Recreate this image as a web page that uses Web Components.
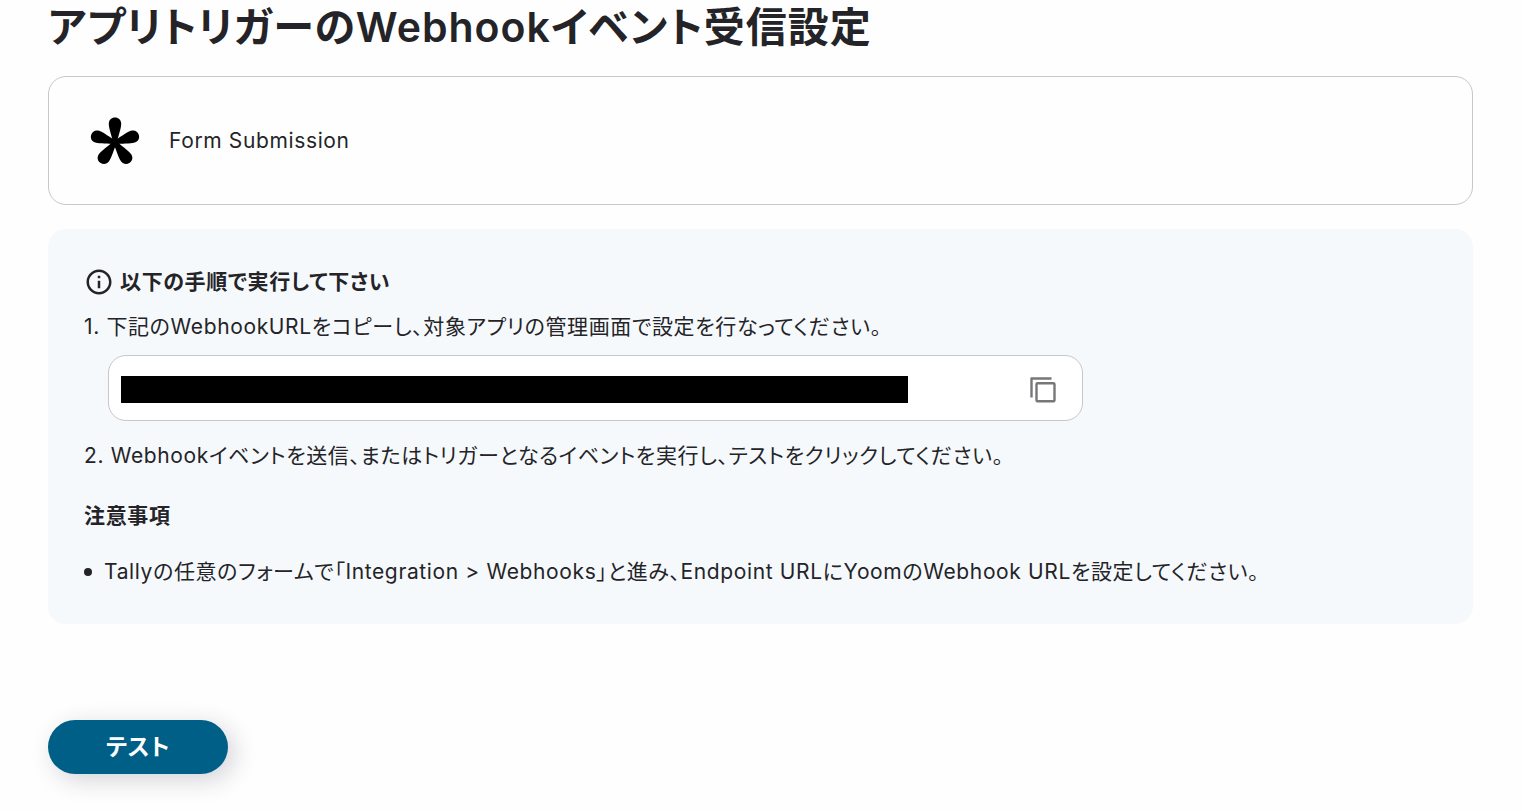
<!DOCTYPE html>
<html lang="ja">
<head>
<meta charset="utf-8">
<meta name="viewport" content="width=device-width, initial-scale=1">
<title>アプリトリガーのWebhookイベント受信設定</title>
<style>
body {
  margin: 0;
  background-color: #fefefe;
  color: #242428;
  font-family: Inter, "Noto Sans CJK JP", sans-serif;
  font-size: 21px;
  line-height: 32px;
  letter-spacing: 0.03em;
  font-feature-settings: "palt";
}
</style>
</head>
<body>
<webhook-page>
  <span slot="title">アプリトリガーのWebhookイベント受信設定</span>
  <trigger-card>Form Submission</trigger-card>
  <guide-panel>
    <span slot="heading">以下の手順で実行して下さい</span>
    <span slot="first">1. 下記のWebhookURLをコピーし、対象アプリの管理画面で設定を行なってください。</span>
    <copy-field slot="field"></copy-field>
    <span slot="second">2. Webhookイベントを送信、またはトリガーとなるイベントを実行し、テストをクリックしてください。</span>
    <span slot="notes">注意事項</span>
    <span slot="note">Tallyの任意のフォームで「Integration &gt; Webhooks」と進み、Endpoint URLにYoomのWebhook URLを設定してください。</span>
  </guide-panel>
  <test-button slot="action">テスト</test-button>
</webhook-page>

<script>
"use strict"

class WebhookPage extends HTMLElement {
  constructor() {
    super();
    const template = document.createElement('template');
    template.innerHTML = `
    <style>
    :host {
      display: block;
      padding: 0 49px 36px 48px;
    }
    h1 {
      margin: 0 0 22px;
      font-size: 41px;
      line-height: 54px;
      font-weight: 600;
      letter-spacing: 1px;
    }
    main {
      display: flex;
      flex-direction: column;
      gap: 24px;
    }
    footer {
      margin-top: 96px;
    }
    </style>
    <h1><slot name="title"></slot></h1>
    <main><slot></slot></main>
    <footer><slot name="action"></slot></footer>
    `;
    this.attachShadow({ mode: 'open' }).appendChild(template.content.cloneNode(true));
  }
}

class TriggerCard extends HTMLElement {
  constructor() {
    super();
    const template = document.createElement('template');
    template.innerHTML = `
    <style>
    :host {
      display: flex;
      align-items: center;
      gap: 28px;
      padding: 40px;
      border: 1px solid #c6c6cb;
      border-radius: 18px;
    }
    svg {
      display: block;
      width: 52px;
      height: 47px;
      overflow: visible;
    }
    </style>
    <svg viewBox="0 0 52 47" aria-hidden="true">
      <defs>
        <path id="petal" d="M24 26C23 19 19.800 12 19.800 6.800C19.800 2.800 22.500 0.500 26 0.500S32.200 2.800 32.200 6.800C32.200 12 29 19 28 26Z"/>
      </defs>
      <use href="#petal"/>
      <use href="#petal" transform="rotate(72 26 25.500)"/>
      <use href="#petal" transform="rotate(144 26 25.500)"/>
      <use href="#petal" transform="rotate(216 26 25.500)"/>
      <use href="#petal" transform="rotate(288 26 25.500)"/>
    </svg>
    <span><slot></slot></span>
    `;
    this.attachShadow({ mode: 'open' }).appendChild(template.content.cloneNode(true));
  }
}

class GuidePanel extends HTMLElement {
  constructor() {
    super();
    const template = document.createElement('template');
    template.innerHTML = `
    <style>
    :host {
      display: block;
      padding: 37px 36px 36px;
      border-radius: 18px;
      background-color: #f5f9fc;
    }
    h2, h3, p, ul {
      margin: 0;
      font-size: inherit;
    }
    h2, h3 {
      font-weight: 600;
    }
    h2 {
      display: flex;
      align-items: center;
      gap: 6px;
      margin-bottom: 13px;
    }
    h2 svg {
      width: 30px;
      height: 30px;
    }
    .field {
      margin: 12px 0 19px 24px;
    }
    h3 {
      margin: 28px 0 24px;
    }
    ul {
      padding: 0;
      list-style: none;
    }
    li {
      display: flex;
      align-items: center;
      gap: 12px;
    }
    li::before {
      content: "";
      width: 8px;
      height: 8px;
      border-radius: 50%;
      background-color: currentColor;
    }
    </style>
    <h2>
      <svg viewBox="0 0 24 24" fill="currentColor" aria-hidden="true">
        <path d="M11 7h2v2h-2zm0 4h2v6h-2zm1-9C6.480 2 2 6.480 2 12s4.480 10 10 10 10-4.480 10-10S17.520 2 12 2zm0 18c-4.410 0-8-3.590-8-8s3.590-8 8-8 8 3.590 8 8-3.590 8-8 8z"/>
      </svg>
      <slot name="heading"></slot>
    </h2>
    <p><slot name="first"></slot></p>
    <div class="field"><slot name="field"></slot></div>
    <p><slot name="second"></slot></p>
    <h3><slot name="notes"></slot></h3>
    <ul><li><slot name="note"></slot></li></ul>
    `;
    this.attachShadow({ mode: 'open' }).appendChild(template.content.cloneNode(true));
  }
}

class CopyField extends HTMLElement {
  constructor() {
    super();
    const template = document.createElement('template');
    template.innerHTML = `
    <style>
    :host {
      display: flex;
      align-items: center;
      justify-content: space-between;
      box-sizing: border-box;
      max-width: 975px;
      padding: 14px 24px 12px 12px;
      border: 1px solid #c6c6cb;
      border-radius: 18px;
      background-color: #fff;
    }
    input {
      box-sizing: border-box;
      width: 84%;
      height: 27px;
      padding: 0;
      border: 0;
      background-color: #000;
    }
    button {
      display: flex;
      padding: 4px 0;
      border: 0;
      background: none;
      color: #77777a;
      cursor: pointer;
    }
    svg {
      width: 30px;
      height: 30px;
    }
    </style>
    <input type="text" readonly aria-label="Webhook URL">
    <button type="button" aria-label="コピー">
      <svg viewBox="0 0 30 30" fill="none" stroke="currentColor" stroke-width="2.400" stroke-linejoin="round" aria-hidden="true">
        <path d="M3.500 23.500V4.500H23.500"/>
        <rect x="8.500" y="9.300" width="18" height="18" rx="1"/>
      </svg>
    </button>
    `;
    this.attachShadow({ mode: 'open' }).appendChild(template.content.cloneNode(true));
  }
}

class TestButton extends HTMLElement {
  constructor() {
    super();
    const template = document.createElement('template');
    template.innerHTML = `
    <style>
    :host {
      display: inline-flex;
    }
    button {
      min-width: 180px;
      padding: 11px 24px;
      border: 0;
      border-radius: 27px;
      background-color: #005f87;
      box-shadow: 6px 6px 24px rgba(40, 40, 70, 0.2);
      color: #fff;
      font: inherit;
      font-size: 23px;
      font-weight: 700;
      font-feature-settings: inherit;
      letter-spacing: inherit;
      cursor: pointer;
    }
    </style>
    <button type="button"><slot></slot></button>
    `;
    this.attachShadow({ mode: 'open' }).appendChild(template.content.cloneNode(true));
  }
}

customElements.define('webhook-page', WebhookPage);
customElements.define('trigger-card', TriggerCard);
customElements.define('guide-panel', GuidePanel);
customElements.define('copy-field', CopyField);
customElements.define('test-button', TestButton);
</script>
</body>
</html>
